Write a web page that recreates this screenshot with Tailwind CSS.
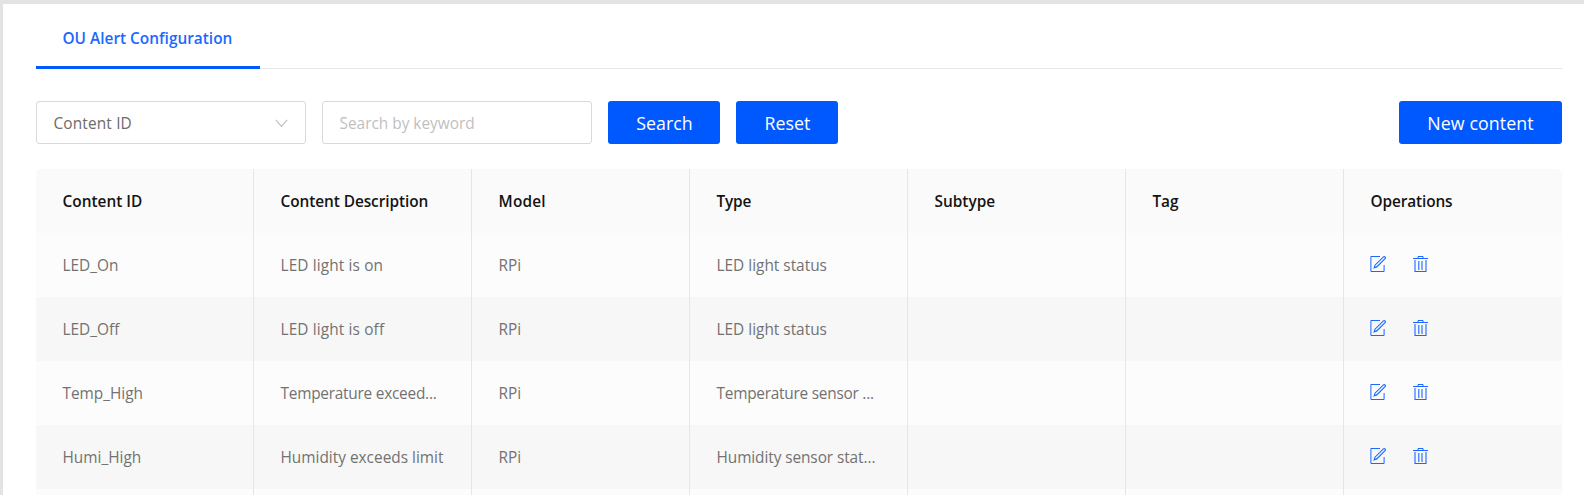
<!DOCTYPE html>
<html lang="en">
<head>
<meta charset="utf-8">
<title>OU Alert Configuration</title>
<script src="https://cdn.jsdelivr.net/npm/@tailwindcss/browser@4"></script>
</head>
<body class="h-[495px] overflow-hidden bg-[#e3e3e3] pt-1 pl-[3px] font-['Open_Sans',sans-serif] text-base">
<svg class="hidden">
  <symbol id="edit" viewBox="0 0 16 16">
    <g fill="none" stroke="currentColor">
      <path d="M10 .5H.9V15.5H14.1V9"/>
      <path d="M4.2 11.8L5 9.2L13.4 .9Q14.2 .3 15 1Q15.7 1.8 15.1 2.6L6.7 10.9Z" stroke-width="1.15"/>
    </g>
  </symbol>
  <symbol id="trash" viewBox="0 0 16 16">
    <g fill="none" stroke="currentColor">
      <path d="M0 2.5H15M5 2.5V.5H10V2.5"/>
      <path d="M2 4V15.5H13V4" stroke-width="1.1"/>
      <path d="M5.8 5V14M9 5V14" stroke-width="1.1"/>
    </g>
  </symbol>
</svg>
<main class="h-[491px] overflow-hidden bg-white pl-[33px] pr-[22px]">
  <nav class="flex h-[65px] border-b border-[#e6e6e6]">
    <a class="flex h-[65px] w-56 items-center border-b-[3px] border-[#0059ff] pt-2 pl-[26.5px] text-[15.4px] font-semibold text-[#1a69ff]">OU Alert Configuration</a>
  </nav>
  <div class="mt-8 flex h-[43px] gap-4">
    <div class="flex w-[270px] items-center justify-between rounded-[3px] border border-[#d9d9d9] pr-[17px] pl-[16.5px] text-[15.4px] tracking-[0.15px] text-[#6b6b6b]">
      <span class="pt-[3px]">Content ID</span>
      <svg class="mt-px h-[9px] w-[13px] text-[#bfbfbf]" viewBox="0 0 13 9" fill="none" stroke="currentColor" stroke-width="1.1"><path d="M.8 .8L6.5 7.3L12.2 .8"/></svg>
    </div>
    <div class="flex w-[270px] items-center rounded-[3px] border border-[#d9d9d9] pt-[3px] pl-[16.5px] text-[15.4px] text-[#bfbfbf]">Search by keyword</div>
    <button class="w-28 rounded-[3px] bg-[#0059ff] pt-px pl-px text-[17.8px] text-white">Search</button>
    <button class="w-[102px] rounded-[3px] bg-[#0059ff] pt-px pl-px text-[17.8px] text-white">Reset</button>
    <button class="ml-auto w-[163px] rounded-[3px] bg-[#0059ff] pt-px text-[17.8px] tracking-[0.1px] text-white">New content</button>
  </div>
  <section class="mt-[25px] overflow-hidden rounded-t-[5px] text-[15.4px] text-[#727272]">
    <div class="grid h-16 grid-cols-7 items-stretch divide-x divide-[#e6e6e6] bg-[#fafafa] font-semibold text-[#141414] [&>div]:flex [&>div]:items-center [&>div]:pt-0.5 [&>div]:pl-[26.5px]">
      <div>Content ID</div><div class="tracking-[-0.07px]">Content Description</div><div class="tracking-[0.2px]">Model</div><div class="tracking-[-0.2px]">Type</div><div>Subtype</div><div class="tracking-[-0.1px]">Tag</div><div class="tracking-[-0.12px]">Operations</div>
    </div>
    <div class="grid h-16 grid-cols-7 divide-x divide-[#e6e6e6] bg-[#fcfcfc] [&>div]:flex [&>div]:items-center [&>div]:pt-0.5 [&>div]:pl-[26.5px]">
      <div>LED_On</div><div class="tracking-[0.13px]">LED light is on</div><div>RPi</div><div>LED light status</div><div></div><div></div>
      <div class="gap-[27px] pt-0! pb-0.5 text-[#1a69ff] pl-[26px]!"><svg class="size-4"><use href="#edit"/></svg><svg class="size-4"><use href="#trash"/></svg></div>
    </div>
    <div class="grid h-16 grid-cols-7 divide-x divide-[#e6e6e6] bg-[#f7f7f7] [&>div]:flex [&>div]:items-center [&>div]:pt-0.5 [&>div]:pl-[26.5px]">
      <div>LED_Off</div><div class="tracking-[0.13px]">LED light is off</div><div>RPi</div><div>LED light status</div><div></div><div></div>
      <div class="gap-[27px] pt-0! pb-0.5 text-[#1a69ff] pl-[26px]!"><svg class="size-4"><use href="#edit"/></svg><svg class="size-4"><use href="#trash"/></svg></div>
    </div>
    <div class="grid h-16 grid-cols-7 divide-x divide-[#e6e6e6] bg-[#fcfcfc] [&>div]:flex [&>div]:items-center [&>div]:pt-0.5 [&>div]:pl-[26.5px]">
      <div>Temp_High</div><div class="tracking-[-0.24px]">Temperature exceed...</div><div>RPi</div><div class="tracking-[-0.24px]">Temperature sensor ...</div><div></div><div></div>
      <div class="gap-[27px] pt-0! pb-0.5 text-[#1a69ff] pl-[26px]!"><svg class="size-4"><use href="#edit"/></svg><svg class="size-4"><use href="#trash"/></svg></div>
    </div>
    <div class="grid h-16 grid-cols-7 divide-x divide-[#e6e6e6] bg-[#f7f7f7] [&>div]:flex [&>div]:items-center [&>div]:pt-0.5 [&>div]:pl-[26.5px]">
      <div>Humi_High</div><div>Humidity exceeds limit</div><div>RPi</div><div class="tracking-[-0.08px]">Humidity sensor stat...</div><div></div><div></div>
      <div class="gap-[27px] pt-0! pb-0.5 text-[#1a69ff] pl-[26px]!"><svg class="size-4"><use href="#edit"/></svg><svg class="size-4"><use href="#trash"/></svg></div>
    </div>
    <div class="grid h-16 grid-cols-7 divide-x divide-[#e6e6e6] bg-[#fcfcfc]">
      <div></div><div></div><div></div><div></div><div></div><div></div><div></div>
    </div>
  </section>
</main>
</body>
</html>
